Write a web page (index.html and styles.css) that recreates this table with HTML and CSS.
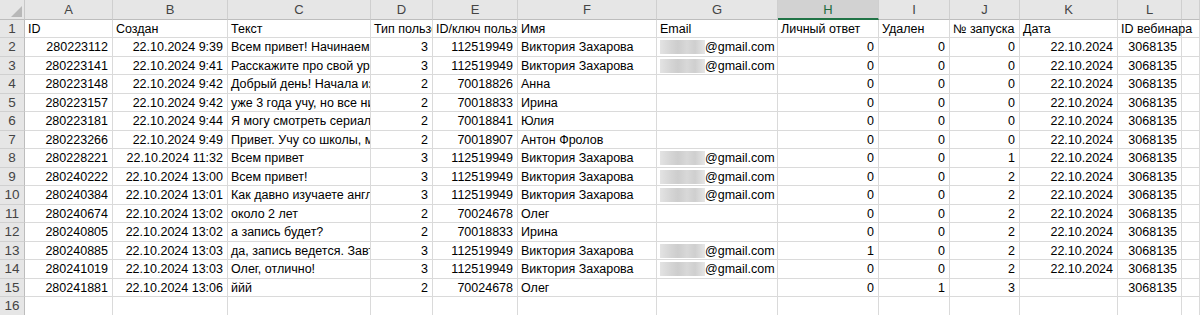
FILE: index.html
```html
<!DOCTYPE html>
<html lang="ru">
<head>
<meta charset="utf-8">
<title>Sheet</title>
<link rel="stylesheet" href="styles.css">
</head>
<body>
<div class="sheet">
  <div class="corner"><span class="tri"></span></div>
  <div class="ch">A</div><div class="ch">B</div><div class="ch">C</div><div class="ch">D</div><div class="ch">E</div><div class="ch">F</div><div class="ch">G</div><div class="ch sel">H</div><div class="ch">I</div><div class="ch">J</div><div class="ch">K</div><div class="ch">L</div><div class="ch"></div>

  <div class="rh">1</div><div class="c">ID</div><div class="c">Создан</div><div class="c">Текст</div><div class="c">Тип пользователя</div><div class="c">ID/ключ пользователя</div><div class="c">Имя</div><div class="c">Email</div><div class="c">Личный ответ</div><div class="c">Удален</div><div class="c">№ запуска</div><div class="c">Дата</div><div class="c ov">ID вебинара</div><div class="c"></div>

  <div class="rh">2</div><div class="c r">280223112</div><div class="c r">22.10.2024 9:39</div><div class="c">Всем привет! Начинаем урок</div><div class="c r">3</div><div class="c r">112519949</div><div class="c">Виктория Захарова</div><div class="c"><span class="blur"></span>@gmail.com</div><div class="c r">0</div><div class="c r">0</div><div class="c r">0</div><div class="c r">22.10.2024</div><div class="c r">3068135</div><div class="c"></div>

  <div class="rh">3</div><div class="c r">280223141</div><div class="c r">22.10.2024 9:41</div><div class="c">Расскажите про свой уровень</div><div class="c r">3</div><div class="c r">112519949</div><div class="c">Виктория Захарова</div><div class="c"><span class="blur"></span>@gmail.com</div><div class="c r">0</div><div class="c r">0</div><div class="c r">0</div><div class="c r">22.10.2024</div><div class="c r">3068135</div><div class="c"></div>

  <div class="rh">4</div><div class="c r">280223148</div><div class="c r">22.10.2024 9:42</div><div class="c">Добрый день! Начала изучать</div><div class="c r">2</div><div class="c r">70018826</div><div class="c">Анна</div><div class="c"></div><div class="c r">0</div><div class="c r">0</div><div class="c r">0</div><div class="c r">22.10.2024</div><div class="c r">3068135</div><div class="c"></div>

  <div class="rh">5</div><div class="c r">280223157</div><div class="c r">22.10.2024 9:42</div><div class="c">уже 3 года учу, но все никак</div><div class="c r">2</div><div class="c r">70018833</div><div class="c">Ирина</div><div class="c"></div><div class="c r">0</div><div class="c r">0</div><div class="c r">0</div><div class="c r">22.10.2024</div><div class="c r">3068135</div><div class="c"></div>

  <div class="rh">6</div><div class="c r">280223181</div><div class="c r">22.10.2024 9:44</div><div class="c">Я могу смотреть сериалы</div><div class="c r">2</div><div class="c r">70018841</div><div class="c">Юлия</div><div class="c"></div><div class="c r">0</div><div class="c r">0</div><div class="c r">0</div><div class="c r">22.10.2024</div><div class="c r">3068135</div><div class="c"></div>

  <div class="rh">7</div><div class="c r">280223266</div><div class="c r">22.10.2024 9:49</div><div class="c">Привет. Учу со школы, много</div><div class="c r">2</div><div class="c r">70018907</div><div class="c">Антон Фролов</div><div class="c"></div><div class="c r">0</div><div class="c r">0</div><div class="c r">0</div><div class="c r">22.10.2024</div><div class="c r">3068135</div><div class="c"></div>

  <div class="rh">8</div><div class="c r">280228221</div><div class="c r">22.10.2024 11:32</div><div class="c">Всем привет</div><div class="c r">3</div><div class="c r">112519949</div><div class="c">Виктория Захарова</div><div class="c"><span class="blur"></span>@gmail.com</div><div class="c r">0</div><div class="c r">0</div><div class="c r">1</div><div class="c r">22.10.2024</div><div class="c r">3068135</div><div class="c"></div>

  <div class="rh">9</div><div class="c r">280240222</div><div class="c r">22.10.2024 13:00</div><div class="c">Всем привет!</div><div class="c r">3</div><div class="c r">112519949</div><div class="c">Виктория Захарова</div><div class="c"><span class="blur"></span>@gmail.com</div><div class="c r">0</div><div class="c r">0</div><div class="c r">2</div><div class="c r">22.10.2024</div><div class="c r">3068135</div><div class="c"></div>

  <div class="rh">10</div><div class="c r">280240384</div><div class="c r">22.10.2024 13:01</div><div class="c">Как давно изучаете английский?</div><div class="c r">3</div><div class="c r">112519949</div><div class="c">Виктория Захарова</div><div class="c"><span class="blur"></span>@gmail.com</div><div class="c r">0</div><div class="c r">0</div><div class="c r">2</div><div class="c r">22.10.2024</div><div class="c r">3068135</div><div class="c"></div>

  <div class="rh">11</div><div class="c r">280240674</div><div class="c r">22.10.2024 13:02</div><div class="c">около 2 лет</div><div class="c r">2</div><div class="c r">70024678</div><div class="c">Олег</div><div class="c"></div><div class="c r">0</div><div class="c r">0</div><div class="c r">2</div><div class="c r">22.10.2024</div><div class="c r">3068135</div><div class="c"></div>

  <div class="rh">12</div><div class="c r">280240805</div><div class="c r">22.10.2024 13:02</div><div class="c">а запись будет?</div><div class="c r">2</div><div class="c r">70018833</div><div class="c">Ирина</div><div class="c"></div><div class="c r">0</div><div class="c r">0</div><div class="c r">2</div><div class="c r">22.10.2024</div><div class="c r">3068135</div><div class="c"></div>

  <div class="rh">13</div><div class="c r">280240885</div><div class="c r">22.10.2024 13:03</div><div class="c">да, запись ведется. Завтра</div><div class="c r">3</div><div class="c r">112519949</div><div class="c">Виктория Захарова</div><div class="c"><span class="blur"></span>@gmail.com</div><div class="c r">1</div><div class="c r">0</div><div class="c r">2</div><div class="c r">22.10.2024</div><div class="c r">3068135</div><div class="c"></div>

  <div class="rh">14</div><div class="c r">280241019</div><div class="c r">22.10.2024 13:03</div><div class="c">Олег, отлично!</div><div class="c r">3</div><div class="c r">112519949</div><div class="c">Виктория Захарова</div><div class="c"><span class="blur"></span>@gmail.com</div><div class="c r">0</div><div class="c r">0</div><div class="c r">2</div><div class="c r">22.10.2024</div><div class="c r">3068135</div><div class="c"></div>

  <div class="rh">15</div><div class="c r">280241881</div><div class="c r">22.10.2024 13:06</div><div class="c">ййй</div><div class="c r">2</div><div class="c r">70024678</div><div class="c">Олег</div><div class="c"></div><div class="c r">0</div><div class="c r">1</div><div class="c r">3</div><div class="c r"></div><div class="c r">3068135</div><div class="c"></div>

  <div class="rh">16</div><div class="c"></div><div class="c"></div><div class="c"></div><div class="c"></div><div class="c"></div><div class="c"></div><div class="c"></div><div class="c"></div><div class="c"></div><div class="c"></div><div class="c"></div><div class="c"></div><div class="c"></div>
</div>
</body>
</html>
```

FILE: styles.css
```css
html, body {
  margin: 0;
  padding: 0;
  background: #ffffff;
}

.sheet {
  width: 1200px;
  height: 315px;
  overflow: hidden;
  display: grid;
  grid-template-columns: 25px 88px 115px 143px 62px 85px 139px 121px 101px 71px 70px 98px 64px 1fr;
  grid-template-rows: 20px repeat(16, 18.47px);
  font-family: "Liberation Sans", Arial, sans-serif;
  font-size: 12.5px;
  color: #000;
}

.corner {
  position: relative;
  background: #e6e6e6;
  border-right: 1px solid #c8c8c8;
  border-bottom: 1px solid #bdbdbd;
  box-sizing: border-box;
}

.corner .tri {
  position: absolute;
  right: 2px;
  bottom: 2px;
  width: 0;
  height: 0;
  border-left: 11px solid transparent;
  border-bottom: 11px solid #b8b8b8;
}

.ch {
  background: #e6e6e6;
  color: #444;
  text-align: center;
  font-size: 13px;
  line-height: 20px;
  border-right: 1px solid #cfcfcf;
  border-bottom: 1px solid #bdbdbd;
  box-sizing: border-box;
}

.ch.sel {
  background: #d2d2d2;
  color: #1e6b3f;
  border-bottom: 2px solid #217346;
  line-height: 19px;
}

.rh {
  background: #e6e6e6;
  color: #444;
  text-align: center;
  font-size: 13.5px;
  line-height: 18px;
  border-right: 1px solid #bdbdbd;
  border-bottom: 1px solid #d0d0d0;
  box-sizing: border-box;
}

.c {
  border-right: 1px solid #dadada;
  border-bottom: 1px solid #dadada;
  box-sizing: border-box;
  padding: 0 0 0 3px;
  line-height: 19px;
  white-space: nowrap;
  overflow: hidden;
}

.c.ov {
  overflow: visible;
}

.c.r {
  text-align: right;
  padding: 0 4px 0 0;
}

.blur {
  display: inline-block;
  width: 45px;
  height: 14px;
  vertical-align: -3px;
  background: linear-gradient(90deg, #e3e3e3 0%, #d6d6d6 22%, #cdcdcd 40%, #d8d8d8 60%, #cfcfcf 78%, #e6e6e6 100%);
  filter: blur(0.6px);
}
```
